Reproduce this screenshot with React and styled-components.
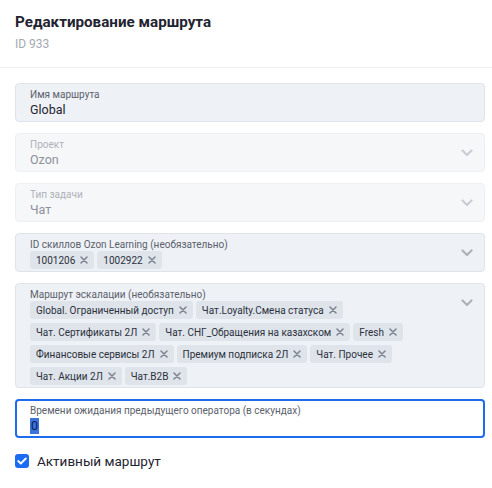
import React from 'react';
import styled, { createGlobalStyle } from 'styled-components';

const GlobalStyle = createGlobalStyle`
  body {
    margin: 0;
    background: #fff;
    font-family: Roboto, "Noto Sans", Arial, sans-serif;
  }
`;

const Page = styled.div`
  width: 492px;
  box-sizing: border-box;
`;

const Header = styled.div`
  padding: 12px 15px 15px;
  border-bottom: 1px solid #eceef2;
`;

const Title = styled.h1`
  margin: 0;
  font-size: 15.2px;
  line-height: 20px;
  font-weight: 700;
  color: #1f2430;
`;

const SubTitle = styled.div`
  margin-top: 4px;
  font-size: 12px;
  line-height: 16px;
  color: #a4a9b1;
`;

const Form = styled.div`
  display: flex;
  flex-direction: column;
  gap: 11px;
  padding: 15px 7px 0 15px;
`;

const Field = styled.div`
  position: relative;
  min-height: 39px;
  box-sizing: border-box;
  padding: ${p => (p.$focused ? '3px 40px 1px 13px' : '4px 40px 2px 14px')};
  border-radius: 4px;
  border: ${p => (p.$focused ? '2px solid #1d6cf0' : '1px solid')};
  border-color: ${p => (p.$focused ? '#1d6cf0' : p.$disabled ? '#eef0f3' : '#dfe3ea')};
  background: ${p => (p.$focused ? '#fff' : p.$disabled ? '#f6f7f9' : '#eef1f6')};
`;

const Label = styled.div`
  font-size: 10px;
  line-height: 13px;
  color: ${p => (p.$disabled ? '#adb2ba' : '#5b616b')};
  white-space: nowrap;
`;

const Value = styled.div`
  font-size: 12.5px;
  line-height: 18px;
  color: ${p => (p.$disabled ? '#8c929b' : '#1f2430')};
`;

const Selected = styled.span`
  display: inline-block;
  padding: 0 1px;
  line-height: 16px;
  background: #3a72de;
  color: #0c214f;
`;

const Chevron = styled.svg`
  position: absolute;
  right: 11px;
  top: 15px;
  width: 12px;
  height: 8px;
`;

const Chips = styled.div`
  display: flex;
  flex-wrap: wrap;
  gap: 4px 3px;
`;

const Chip = styled.span`
  display: inline-flex;
  align-items: center;
  gap: 5px;
  height: 18px;
  padding: 0 6px;
  border-radius: 3px;
  background: #dfe4eb;
  font-size: 10px;
  color: #2b313b;
  white-space: nowrap;
`;

const ChipClose = styled.svg`
  width: 8px;
  height: 8px;
`;

const CheckRow = styled.label`
  display: flex;
  align-items: center;
  gap: 8px;
  margin-top: 4px;
  font-size: 13.5px;
  line-height: 16px;
  color: #1f2430;
`;

const Box = styled.span`
  display: inline-flex;
  align-items: center;
  justify-content: center;
  width: 14px;
  height: 14px;
  border-radius: 3px;
  background: #1b6cf2;
`;

const ArrowDown = ({ disabled }) => (
  <Chevron viewBox="0 0 12 8">
    <path
      d="M1.5 1.5 L6 6 L10.5 1.5"
      fill="none"
      stroke={disabled ? '#c9cdd4' : '#adb2ba'}
      strokeWidth="2.2"
      strokeLinecap="round"
      strokeLinejoin="round"
    />
  </Chevron>
);

const Tag = ({ children }) => (
  <Chip>
    {children}
    <ChipClose viewBox="0 0 8 8">
      <path d="M1 1 L7 7 M7 1 L1 7" stroke="#7c838e" strokeWidth="1.5" strokeLinecap="round" />
    </ChipClose>
  </Chip>
);

const skills = ['1001206', '1002922'];

const escalation = [
  'Global. Ограниченный доступ',
  'Чат.Loyalty.Смена статуса',
  'Чат. Сертификаты 2Л',
  'Чат. СНГ_Обращения на казахском',
  'Fresh',
  'Финансовые сервисы 2Л',
  'Премиум подписка 2Л',
  'Чат. Прочее',
  'Чат. Акции 2Л',
  'Чат.B2B',
];

export default function App() {
  return (
    <Page>
      <GlobalStyle />
      <Header>
        <Title>Редактирование маршрута</Title>
        <SubTitle>ID 933</SubTitle>
      </Header>
      <Form>
        <Field>
          <Label>Имя маршрута</Label>
          <Value>Global</Value>
        </Field>
        <Field $disabled>
          <Label $disabled>Проект</Label>
          <Value $disabled>Ozon</Value>
          <ArrowDown disabled />
        </Field>
        <Field $disabled>
          <Label $disabled>Тип задачи</Label>
          <Value $disabled>Чат</Value>
          <ArrowDown disabled />
        </Field>
        <Field>
          <Label>ID скиллов Ozon Learning (необязательно)</Label>
          <Chips>
            {skills.map(s => (
              <Tag key={s}>{s}</Tag>
            ))}
          </Chips>
          <ArrowDown />
        </Field>
        <Field>
          <Label>Маршрут эскалации (необязательно)</Label>
          <Chips>
            {escalation.map(s => (
              <Tag key={s}>{s}</Tag>
            ))}
          </Chips>
          <ArrowDown />
        </Field>
        <Field $focused>
          <Label>Времени ожидания предыдущего оператора (в секундах)</Label>
          <Value>
            <Selected>0</Selected>
          </Value>
        </Field>
        <CheckRow>
          <Box>
            <svg width="10" height="8" viewBox="0 0 10 8">
              <path d="M1.2 4 L3.8 6.5 L8.8 1.5" fill="none" stroke="#fff" strokeWidth="1.8" strokeLinecap="round" strokeLinejoin="round" />
            </svg>
          </Box>
          Активный маршрут
        </CheckRow>
      </Form>
    </Page>
  );
}
